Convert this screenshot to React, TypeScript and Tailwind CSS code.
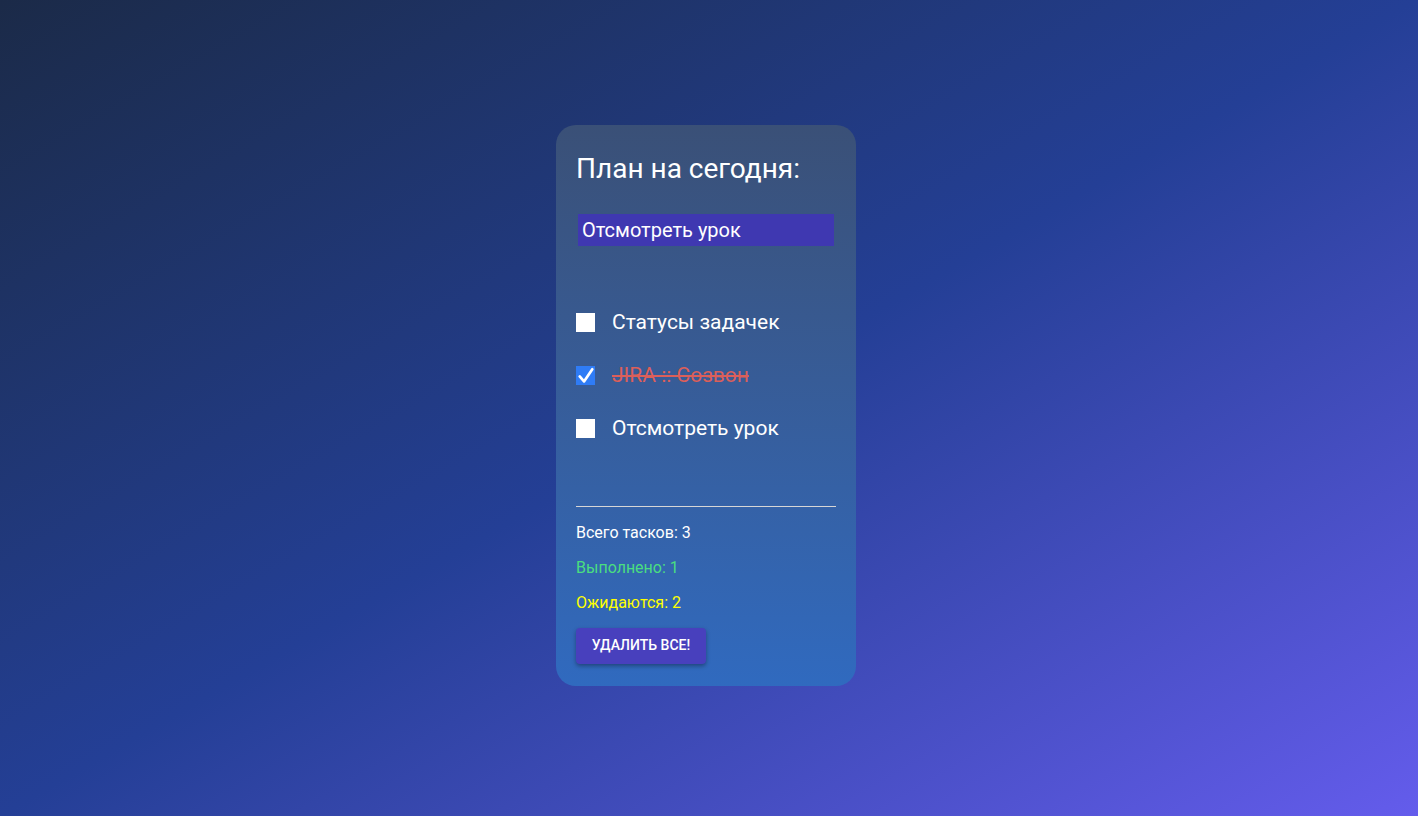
import React from 'react';

type Task = { id: number; title: string; done: boolean };

const initial: Task[] = [
  { id: 1, title: 'Статусы задачек', done: false },
  { id: 2, title: 'JIRA :: Созвон', done: true },
  { id: 3, title: 'Отсмотреть урок', done: false },
];

export default function App() {
  const [tasks, setTasks] = React.useState<Task[]>(initial);
  const [value, setValue] = React.useState('Отсмотреть урок');

  const toggle = (id: number) =>
    setTasks((prev) => prev.map((t) => (t.id === id ? { ...t, done: !t.done } : t)));

  const doneCount = tasks.filter((t) => t.done).length;

  return (
    <div
      className="min-h-screen w-full flex items-center justify-center pr-[6px] pb-[6px] bg-gradient-to-br from-[#1b2a48] via-[#243f96] to-[#645cec]"
      style={{ fontFamily: 'Roboto, "Noto Sans", sans-serif' }}
    >
      <div className="w-[300px] h-[561px] rounded-[20px] bg-gradient-to-b from-[#3a5077] to-[#306abf] px-5 pt-[26px] pb-[22px] flex flex-col">
        <h1 className="text-[28px] leading-[36px] text-white">План на сегодня:</h1>

        <input
          value={value}
          onChange={(e) => setValue(e.target.value)}
          className="mt-[27px] ml-[2px] w-[256px] h-[32px] bg-[#3f38b1] text-white text-[20px] px-1 outline-none"
        />

        {/* Task list */}
        <ul className="mt-[65px] flex flex-col gap-[29px]">
          {tasks.map((t) => (
            <li key={t.id} className="flex items-center h-[24px]">
              <button
                onClick={() => toggle(t.id)}
                className={`w-[19px] h-[19px] shrink-0 flex items-center justify-center ${
                  t.done ? 'bg-[#2f7cf6]' : 'bg-white'
                }`}
              >
                {t.done && (
                  <svg viewBox="0 0 20 20" className="w-[18px] h-[18px]">
                    <path d="M3 10.5 L7.8 16 L17 2.5" fill="none" stroke="white" strokeWidth="3" strokeLinecap="round" strokeLinejoin="round" />
                  </svg>
                )}
              </button>
              <span
                className={`ml-[17px] text-[21px] ${
                  t.done ? 'text-[#dc5f5a] line-through' : 'text-white'
                }`}
              >
                {t.title}
              </span>
            </li>
          ))}
        </ul>

        <div className="mt-[65px] border-t border-[#d6d6d6]" />

        <div className="mt-[17px] flex flex-col gap-[17px] text-[16px] leading-[18px]">
          <p className="text-white">Всего тасков: {tasks.length}</p>
          <p className="text-[#4ade80]">Выполнено: {doneCount}</p>
          <p className="text-[#ffff00]">Ожидаются: {tasks.length - doneCount}</p>
        </div>

        <button
          onClick={() => setTasks([])}
          className="mt-[16px] w-[130px] h-[36px] rounded bg-[#4840bd] text-white text-[14px] font-medium shadow-[0_2px_4px_rgba(0,0,0,0.35)]"
        >
          УДАЛИТЬ ВСЕ!
        </button>
      </div>
    </div>
  );
}
